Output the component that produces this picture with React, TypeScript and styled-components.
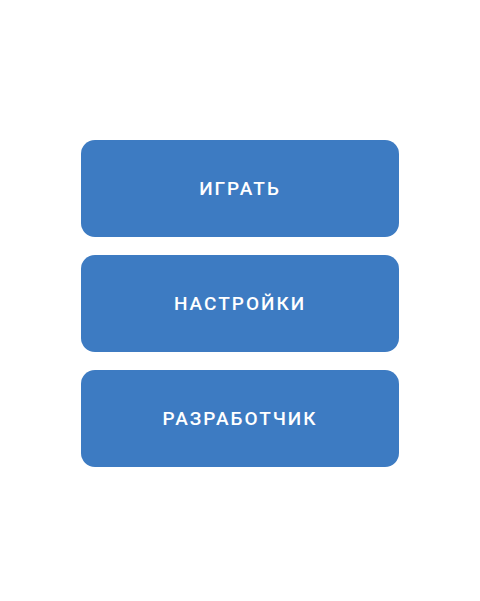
import styled, { createGlobalStyle } from "styled-components";

const GlobalStyle = createGlobalStyle`
  html, body {
    margin: 0;
    padding: 0;
    background: #ffffff;
  }
`;

const Screen = styled.div`
  min-height: 601px;
  display: flex;
  flex-direction: column;
  align-items: center;
  padding-top: 140px;
  box-sizing: border-box;
`;

const Menu = styled.nav`
  display: flex;
  flex-direction: column;
  gap: 18px;
  width: 318px;
`;

const MenuButton = styled.button`
  height: 97px;
  border: none;
  border-radius: 14px;
  background: #3d7bc2;
  color: #ffffff;
  font-family: Roboto, "Noto Sans", sans-serif;
  font-weight: 500;
  font-size: 19px;
  letter-spacing: 2px;
  text-transform: uppercase;
  cursor: pointer;
  padding: 0;
`;

const items = ["Играть", "Настройки", "Разработчик"];

export default function App() {
  return (
    <>
      <GlobalStyle />
      <Screen>
        <Menu>
          {items.map((label) => (
            <MenuButton key={label}>{label}</MenuButton>
          ))}
        </Menu>
      </Screen>
    </>
  );
}
